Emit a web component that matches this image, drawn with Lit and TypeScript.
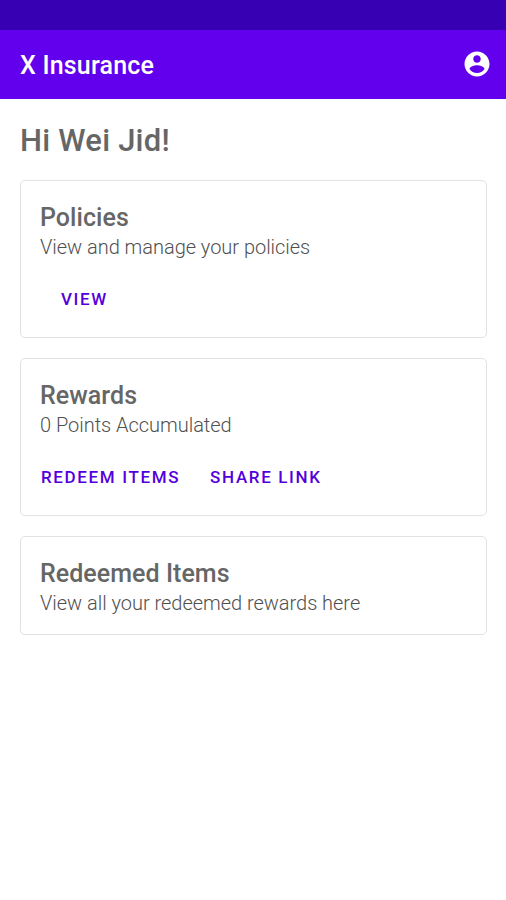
import { LitElement, html, css } from "lit";
import { customElement } from "lit/decorators.js";

interface Card { title: string; text: string; actions: string[]; kind: string; }

const cards: Card[] = [
  { title: "Policies", text: "View and manage your policies", actions: ["VIEW"], kind: "policies" },
  { title: "Rewards", text: "0 Points Accumulated", actions: ["REDEEM ITEMS", "SHARE LINK"], kind: "rewards" },
  { title: "Redeemed Items", text: "View all your redeemed rewards here", actions: [], kind: "items" },
];

@customElement("app-root")
export class AppRoot extends LitElement {
  static styles = css`
    :host { display: block; height: 900px; overflow: hidden; background: #fff; font-family: Roboto, sans-serif; color: #666; }
    * { box-sizing: border-box; }
    .status { height: 29.5px; background: #3700b3; }
    .bar { height: 69px; background: #6200ee; color: #fff; display: flex; align-items: center; justify-content: space-between; padding: 0 14px 0 20px; }
    .brand { font-size: 25px; font-weight: 500; line-height: 30px; letter-spacing: 0.2px; white-space: nowrap; padding-top: 3px; }
    .account { width: 30px; height: 30px; fill: #fff; display: block; }
    main { padding: 23.5px 19px 0 20px; }
    h1 { margin: 0 0 20px; font-size: 31px; line-height: 38px; font-weight: 500; letter-spacing: 0.22px; white-space: nowrap; }
    .cards { display: flex; flex-direction: column; gap: 20px; }
    .card { border: 1px solid #e2e2e2; border-radius: 5px; height: 158px; padding: 20px 19px; }
    .card.items { height: 99px; }
    h2 { margin: 0; font-size: 25px; line-height: 33px; font-weight: 500; letter-spacing: 0.05px; white-space: nowrap; }
    p { margin: 0; font-size: 20px; line-height: 27px; font-weight: 300; letter-spacing: -0.03px; color: #505050; white-space: nowrap; }
    .actions { display: flex; margin-top: 26px; gap: 30px; padding-left: 1px; }
    .policies .actions { padding-left: 21px; }
    button { border: 0; padding: 0; background: none; color: #5300dc; font: 500 17px/24px Roboto, sans-serif; letter-spacing: 1.64px; white-space: nowrap; }
  `;

  render() {
    return html`
      <div class="status"></div>
      <header class="bar">
        <span class="brand">X Insurance</span>
        <svg class="account" viewBox="0 0 24 24"><path d="M12 2C6.48 2 2 6.48 2 12s4.48 10 10 10 10-4.48 10-10S17.52 2 12 2zm0 3c1.66 0 3 1.34 3 3s-1.34 3-3 3-3-1.34-3-3 1.34-3 3-3zm0 14.2c-2.5 0-4.71-1.28-6-3.22.03-1.99 4-3.08 6-3.08 1.99 0 5.97 1.09 6 3.08-1.29 1.94-3.5 3.22-6 3.22z"/></svg>
      </header>
      <main>
        <h1>Hi Wei Jid!</h1>
        <div class="cards">
          ${cards.map((c) => html`
            <section class="card ${c.kind}">
              <h2>${c.title}</h2>
              <p>${c.text}</p>
              ${c.actions.length ? html`<div class="actions">${c.actions.map((a) => html`<button>${a}</button>`)}</div>` : ""}
            </section>`)}
        </div>
      </main>`;
  }
}
